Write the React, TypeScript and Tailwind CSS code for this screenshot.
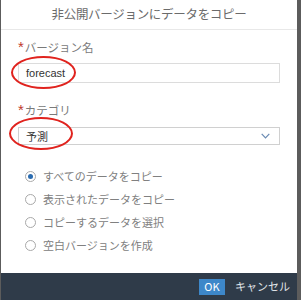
import React from "react";

const jp = { fontFamily: '"Noto Sans CJK JP", "Noto Sans", sans-serif' };

function Radio({ label, checked }: { label: string; checked?: boolean }) {
  return (
    <div className="flex items-center h-[23px]">
      <div className="ml-[24px] w-[11px] h-[11px] rounded-full border border-[#a9a9a9] bg-white flex items-center justify-center">
        {checked && <div className="w-[5px] h-[5px] rounded-full bg-[#2b6cb0]" />}
      </div>
      <span className="ml-[7px] text-[11px] text-[#808080]">{label}</span>
    </div>
  );
}

function Label({ text }: { text: string }) {
  return (
    <div className="h-[16px] flex items-center text-[11.5px] text-[#7a7a7a]">
      <span className="self-start text-[#c0392b] text-[15px] leading-[14px] mr-px" style={{ fontFamily: '"Liberation Sans", sans-serif' }}>*</span>
      {text}
    </div>
  );
}

export default function App() {
  return (
    <div className="w-[301px] h-[300px] bg-[#5c5c5c] flex pl-px pr-[4px] overflow-hidden" style={jp}>
      <div className="relative w-[296px] h-full bg-white flex flex-col">
        <div className="h-[30px] flex items-center justify-center border-b border-[#e8e8e8] text-[12.5px] text-[#6b6b6b] tracking-[-0.3px]">
          非公開バージョンにデータをコピー
        </div>
        <div className="flex-1 flex flex-col pl-[17px]">
          <div className="mt-[10px]">
            <Label text="バージョン名" />
          </div>
          <div className="mt-[7px] w-[262px] h-[20px] border border-[#dcdcdc] flex items-center pl-[7px] text-[11px] text-[#333]" style={{ fontFamily: '"Liberation Sans", sans-serif' }}>
            forecast
          </div>
          <div className="mt-[20px]">
            <Label text="カテゴリ" />
          </div>
          <div className="mt-[8px] w-[262px] h-[18px] border border-[#d0d0d0] flex items-center justify-between pl-[7px] pr-[9px] text-[11px] text-[#333]">
            <span>予測</span>
            <svg width="9" height="6" viewBox="0 0 9 6">
              <path d="M0.7 0.8 L4.5 4.8 L8.3 0.8" fill="none" stroke="#6a8bb3" strokeWidth="1.2" />
            </svg>
          </div>
          <div className="mt-[20px] -ml-[17px] flex flex-col">
            <Radio label="すべてのデータをコピー" checked />
            <Radio label="表示されたデータをコピー" />
            <Radio label="コピーするデータを選択" />
            <Radio label="空白バージョンを作成" />
          </div>
        </div>
        <div className="h-[27px] bg-[#2f3b49] flex items-center justify-end pr-[7px]">
          <div className="w-[26px] h-[16px] bg-[#3d87c9] text-white text-[11px] flex items-center justify-center">OK</div>
          <span className="ml-[10px] text-[11px] text-[#e0e4e8]">キャンセル</span>
        </div>
        <div className="absolute left-[10px] top-[56px] w-[65px] h-[33px] rounded-[50%] border-2 border-[#e0231e]" />
        <div className="absolute left-[8px] top-[117px] w-[64px] h-[33px] rounded-[50%] border-2 border-[#e0231e]" />
      </div>
    </div>
  );
}
